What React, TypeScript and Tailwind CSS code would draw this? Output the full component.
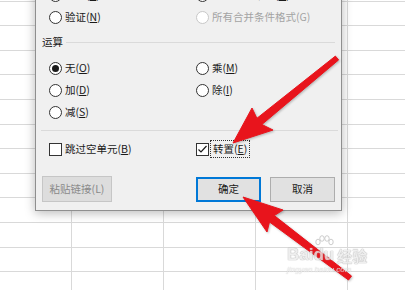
const ROWS = Array.from({ length: 13 });
const COLS = Array.from({ length: 5 });

const Sheet = () => (
    <div className="flex flex-col mt-[-22.9px] ml-[-20px]">
        {ROWS.map((_, r) => (
            <div key={r} className="flex h-[24.6px] shrink-0 border-b border-[#d9d9d9]">
                {COLS.map((_, c) => (
                    <div key={c} className="w-[92px] shrink-0 border-r border-[#d9d9d9]" />
                ))}
            </div>
        ))}
    </div>
);

interface ILabelProps {
    text: string;
    mn: string;
    underline?: boolean;
}

const Label = ({ text, mn, underline = true }: ILabelProps) => (
    <span className="whitespace-nowrap">
        {text}(
        {underline ? <span className="underline decoration-1 underline-offset-[1px]">{mn}</span> : mn})
    </span>
);

interface IRadioProps {
    text: string;
    mn: string;
    checked?: boolean;
    disabled?: boolean;
}

const Radio = ({ text, mn, checked, disabled }: IRadioProps) => (
    <div className={`flex items-center gap-[3px] ${disabled ? "text-[#a3a3a3]" : "text-[#1a1a1a]"}`}>
        <span
            className={`flex h-[13px] w-[13px] shrink-0 items-center justify-center rounded-full border bg-white ${
                disabled ? "border-[#c8c8c8] bg-[#f4f4f4]" : "border-[#333333]"
            }`}
        >
            {checked && <span className="h-[7px] w-[7px] rounded-full bg-[#1a1a1a]" />}
        </span>
        <Label text={text} mn={mn} underline={!disabled} />
    </div>
);

const Check = ({ checked }: { checked?: boolean }) => (
    <span className="flex h-[13px] w-[13px] shrink-0 items-center justify-center border border-[#333333] bg-white">
        {checked && (
            <svg width="11" height="11" viewBox="0 0 11 11">
                <polyline points="1.5,5.5 4,8 9.5,2" fill="none" stroke="#1a1a1a" strokeWidth="1.2" />
            </svg>
        )}
    </span>
);

const Dialog = () => (
    <div className="absolute left-[35px] top-[-30px] flex w-[307px] flex-col border border-[#8f8f8f] bg-[#f0f0f0] pb-[8px] pl-[6px] pr-[6px] pt-[13px] text-[10.5px] leading-none shadow-[0_2px_10px_rgba(0,0,0,0.28)]">
        <div className="grid h-[22px] grid-cols-[147px_1fr] items-center pl-[7px]">
            <Radio text="批注" mn="C" />
            <Radio text="值和数字格式" mn="U" />
        </div>
        <div className="grid h-[22px] grid-cols-[147px_1fr] items-center pl-[7px]">
            <Radio text="验证" mn="N" />
            <Radio text="所有合并条件格式" mn="G" disabled />
        </div>

        <div className="flex h-[29px] items-center gap-[3px] text-[#1a1a1a]">
            <span>运算</span>
            <div className="h-px flex-1 bg-[#dadada]" />
        </div>
        <div className="grid h-[22px] grid-cols-[147px_1fr] items-center pl-[7px]">
            <Radio text="无" mn="O" checked />
            <Radio text="乘" mn="M" />
        </div>
        <div className="grid h-[22px] grid-cols-[147px_1fr] items-center pl-[7px]">
            <Radio text="加" mn="D" />
            <Radio text="除" mn="I" />
        </div>
        <div className="grid h-[22px] grid-cols-[147px_1fr] items-center pl-[7px]">
            <Radio text="减" mn="S" />
        </div>

        <div className="ml-[-1px] mr-[-3px] mt-[7px] h-px bg-[#dadada]" />

        <div className="mt-[7px] grid h-[22px] grid-cols-[147px_1fr] items-center pl-[7px] text-[#1a1a1a]">
            <div className="flex items-center gap-[3px]">
                <Check />
                <Label text="跳过空单元" mn="B" />
            </div>
            <div className="flex items-center gap-[1px]">
                <Check checked />
                <span className="flex h-[18px] items-center border border-dotted border-[#333333] px-[2px]">
                    <Label text="转置" mn="E" />
                </span>
            </div>
        </div>

        <div className="mt-[16px] flex h-[26px] items-center">
            <button className="flex h-[26px] w-[70px] items-center justify-center border border-[#c6c6c6] bg-[#dddddd] text-[#8a8a8a]">
                粘贴链接(L)
            </button>
            <button className="ml-auto flex h-[25px] w-[65px] items-center justify-center border border-[#0078d7] bg-[#e1e1e1] text-[#1a1a1a] shadow-[inset_0_0_0_1px_#0078d7]">
                确定
            </button>
            <button className="ml-[9px] flex h-[25px] w-[65px] items-center justify-center border border-[#adadad] bg-[#e1e1e1] text-[#1a1a1a]">
                取消
            </button>
        </div>
    </div>
);

const Arrows = () => (
    <svg
        className="pointer-events-none absolute left-0 top-0 drop-shadow-[1px_1px_1px_rgba(0,0,0,0.25)]"
        width="405"
        height="290"
        viewBox="0 0 405 290"
    >
        <polygon
            points="338.6,59.9 261.9,124.5 273,130 233,143 252,108 256.9,118.3 335.4,56.1"
            fill="#e8141c"
            stroke="#e8141c"
            strokeWidth="1"
            strokeLinejoin="round"
        />
        <polygon
            points="351.5,276 274.3,215.6 283,210 243,197 267,232 269.5,222 348.5,280"
            fill="#e8141c"
            stroke="#e8141c"
            strokeWidth="1"
            strokeLinejoin="round"
        />
    </svg>
);

const Watermark = () => (
    <div className="pointer-events-none absolute left-[287px] top-[246px] flex flex-col items-start opacity-80">
        <div className="flex items-end font-['Liberation_Sans',sans-serif] text-[17px] font-bold leading-none text-white/80 [text-shadow:0_0_1px_#9a9a9a,0_0_1px_#9a9a9a]">
            <span>Bai</span>
            <span className="relative">
                <svg className="absolute left-[1px] top-[-11px]" width="20" height="12" viewBox="0 0 20 12">
                    <g fill="none" stroke="#b0b0b0" strokeWidth="0.8">
                        <ellipse cx="4" cy="7" rx="2.2" ry="2.8" />
                        <ellipse cx="8" cy="3.5" rx="2.2" ry="2.8" />
                        <ellipse cx="13" cy="3.5" rx="2.2" ry="2.8" />
                        <ellipse cx="17" cy="7" rx="2.2" ry="2.8" />
                    </g>
                </svg>
                du
            </span>
            <span className="ml-[3px] font-['Noto_Sans_CJK_SC',sans-serif] text-[15px]">经验</span>
        </div>
        <div className="mt-[3px] font-['Liberation_Sans',sans-serif] text-[8px] italic leading-none text-white/80 [text-shadow:0_0_1px_#a0a0a0]">
            jingyan.baidu.com
        </div>
    </div>
);

export default function App() {
    return (
        <div className="relative h-[290px] w-[405px] overflow-hidden bg-white font-['Noto_Sans_CJK_SC','Noto_Sans',sans-serif]">
            <Sheet />
            <Dialog />
            <Arrows />
            <Watermark />
        </div>
    );
}
